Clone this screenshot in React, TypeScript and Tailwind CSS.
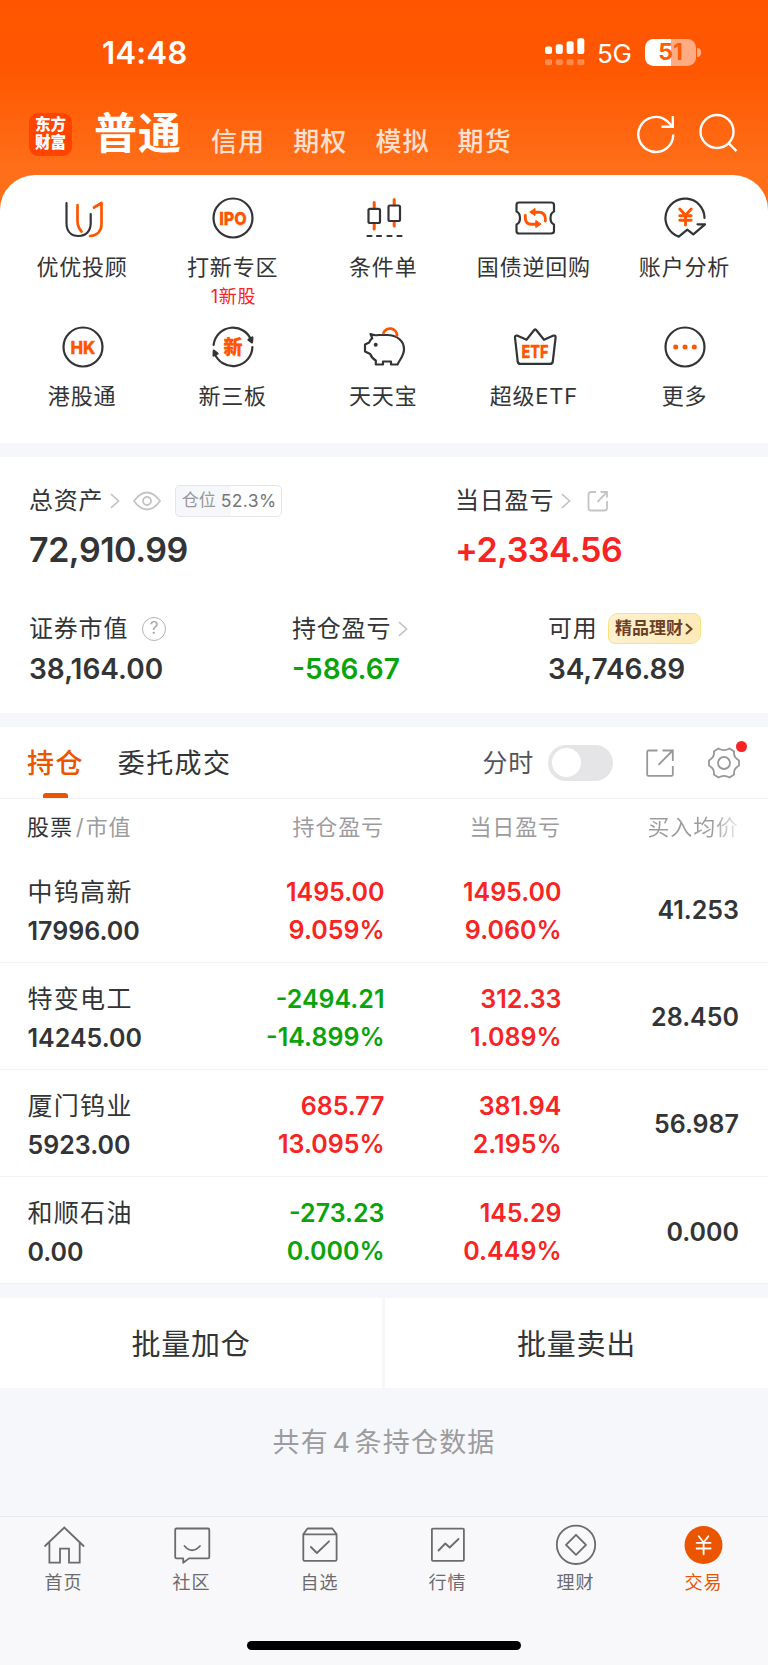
import React from 'react';

type Tone = 'up' | 'down';

interface Holding {
  name: string;
  value: string;
  profit: [string, string];
  profitTone: Tone;
  daily: [string, string];
  price: string;
}

const holdings: Holding[] = [
  { name: '中钨高新', value: '17996.00', profit: ['1495.00', '9.059%'], profitTone: 'up', daily: ['1495.00', '9.060%'], price: '41.253' },
  { name: '特变电工', value: '14245.00', profit: ['-2494.21', '-14.899%'], profitTone: 'down', daily: ['312.33', '1.089%'], price: '28.450' },
  { name: '厦门钨业', value: '5923.00', profit: ['685.77', '13.095%'], profitTone: 'up', daily: ['381.94', '2.195%'], price: '56.987' },
  { name: '和顺石油', value: '0.00', profit: ['-273.23', '0.000%'], profitTone: 'down', daily: ['145.29', '0.449%'], price: '0.000' },
];

const toneClass: Record<Tone, string> = {
  up: 'text-[#f82323]',
  down: 'text-[#09a409]',
};

const DARK = '#333436';
const ORANGE = '#ff5500';

const Icon: React.FC<{ children: React.ReactNode; stroke?: string; width?: number }> = ({ children, stroke = DARK, width = 2.2 }) => (
  <svg
    viewBox="0 0 48 48"
    className="h-12 w-12 shrink-0"
    fill="none"
    stroke={stroke}
    strokeWidth={width}
    strokeLinecap="round"
    strokeLinejoin="round"
  >
    {children}
  </svg>
);

const IconText: React.FC<{ text: string; y: number; length: number; size?: number }> = ({ text, y, length, size = 18 }) => (
  <text
    x="24"
    y={y}
    textAnchor="middle"
    textLength={length}
    lengthAdjust="spacingAndGlyphs"
    fontSize={size}
    fontWeight="800"
    fill={ORANGE}
    stroke={ORANGE}
    strokeWidth="0.3"
    fontFamily="Inter, 'Noto Sans CJK SC', sans-serif"
  >
    {text}
  </text>
);

const shortcuts: { label: string; note?: string; icon: React.ReactNode }[] = [
  {
    label: '优优投顾',
    icon: (
      <Icon>
        <path d="M7.5 9V29C7.5 37 12 42 19.5 42S31.7 37 31.7 29V20" />
        <path d="M18.5 11V27Q18.5 33 22.5 37.5M35 13.5L42.5 9V30C42.5 37 38 41.5 31 42" stroke={ORANGE} strokeWidth="2.7" />
      </Icon>
    ),
  },
  {
    label: '打新专区',
    note: '1新股',
    icon: (
      <Icon>
        <circle cx="24" cy="24" r="19.5" />
        <IconText text="IPO" y={30.7} length={27.5} size={18} />
      </Icon>
    ),
  },
  {
    label: '条件单',
    icon: (
      <Icon>
        <path d="M14.2 8.5V14M14.2 30V35M34.2 5.5V11M34.2 28V32" stroke={ORANGE} strokeWidth="3" />
        <rect x="8.5" y="14.8" width="11.5" height="14.2" rx="1.5" />
        <rect x="28.5" y="11.5" width="11.5" height="15.5" rx="1.5" />
        <path d="M7.5 42H11.5M17 42H21M27.5 42H31.5M37.5 42H41.5" />
      </Icon>
    ),
  },
  {
    label: '国债逆回购',
    icon: (
      <Icon>
        <path d="M8 8.5H40Q43 8.5 43 11V17.5Q39.5 19 39.5 24T43 30.5V37Q43 39.5 40 39.5H8Q5.5 39.5 5.5 37V30.5Q9 29 9 24T5.5 17.5V11Q5.5 8.5 8 8.5Z" />
        <path d="M21 18.2H28Q34 18.2 34.3 24.5V27M27 30.2H20Q14.5 29.8 14.3 24.5V21.5" stroke={ORANGE} strokeWidth="2.9" />
        <path d="M24 14.8V21.6L19 18.2ZM24.8 26.8V33.6L29.8 30.2Z" fill={ORANGE} stroke={ORANGE} strokeWidth="1" />
      </Icon>
    ),
  },
  {
    label: '账户分析',
    icon: (
      <Icon>
        <path d="M43.5 24A19.5 19.5 0 1 0 17.8 42.6L26.3 35.6L32.3 40.3L44 30.3H36.5" />
        <path d="M18.8 15L24.5 21.2L30.2 15M24.5 21.5V31M18.8 21.8H30.2M18.8 26.3H30.2" stroke={ORANGE} strokeWidth="2.9" />
      </Icon>
    ),
  },
  {
    label: '港股通',
    icon: (
      <Icon>
        <circle cx="24" cy="24" r="19.5" />
        <IconText text="HK" y={30.5} length={25} />
      </Icon>
    ),
  },
  {
    label: '新三板',
    icon: (
      <Icon>
        <path d="M4.6 22A19.5 19.5 0 0 1 42.5 18M43.4 24A19.5 19.5 0 0 1 5.5 30" />
        <path d="M39.5 16.8L43.4 14.5L43 19.3ZM4.6 32.5L4.8 27.5L8.6 30.5Z" fill={DARK} />
        <IconText text="新" y={30.8} length={19} size={19} />
      </Icon>
    ),
  },
  {
    label: '天天宝',
    icon: (
      <Icon>
        <path d="M10.5 11Q14 12.8 18.5 12H27C37 12 44 18 44 26C44 33 40 36 37.5 41.5H31V38.5H23V41.5H15.8V37.5Q12 35.5 10.2 31L5 28.5V21.5L9.2 19.5Q10 16.5 12.3 15.2Z" />
        <circle cx="15.7" cy="21.8" r="2" fill={DARK} stroke="none" />
        <path d="M23.5 10A7 7 0 0 1 37 12.5" stroke={ORANGE} strokeWidth="2.8" />
      </Icon>
    ),
  },
  {
    label: '超级ETF',
    icon: (
      <Icon>
        <path d="M6 12.6L15.5 16.8L23.2 7Q24.2 6 25.2 7L33 16.8L42.5 12.6Q44.8 12.3 44.6 14.5L41.8 38.5Q41.5 40.9 39 40.9H9.5Q7 40.9 6.7 38.5L4 14.5Q3.8 12.3 6 12.6Z" />
        <IconText text="ETF" y={34.5} length={27} />
      </Icon>
    ),
  },
  {
    label: '更多',
    icon: (
      <Icon>
        <circle cx="24" cy="24" r="19.5" />
        <g fill={ORANGE} stroke="none">
          <circle cx="14.7" cy="24" r="2.5" />
          <circle cx="24" cy="24" r="2.5" />
          <circle cx="33.3" cy="24" r="2.5" />
        </g>
      </Icon>
    ),
  },
];

const GRAY = '#6b6b6d';

const navItems: { label: string; active?: boolean; icon: React.ReactNode }[] = [
  {
    label: '首页',
    icon: (
      <Icon stroke={GRAY} width={1.8}>
        <path d="M5 25L24.3 6.5L43.6 25M9.4 21V41.7H20V27.7H29V41.7H39.7V21" strokeLinejoin="miter" />
      </Icon>
    ),
  },
  {
    label: '社区',
    icon: (
      <Icon stroke={GRAY} width={1.8}>
        <path d="M8.5 7.5H40Q41.3 7.5 41.3 9V36Q41.3 37.4 40 37.4H21L15.2 41.7V37.4H8.5Q7.2 37.4 7.2 36V9Q7.2 7.5 8.5 7.5Z" />
        <path d="M16.5 25Q24 33.5 32 25" />
      </Icon>
    ),
  },
  {
    label: '自选',
    icon: (
      <Icon stroke={GRAY} width={1.8}>
        <path d="M7.3 13.3L11.5 7.5H36.3L40.6 13.3V38.5Q40.6 39.9 39.2 39.9H8.7Q7.3 39.9 7.3 38.5ZM7.3 13.3H40.6M14.9 26L20.9 32L33 20.3" />
      </Icon>
    ),
  },
  {
    label: '行情',
    icon: (
      <Icon stroke={GRAY} width={1.8}>
        <rect x="7.9" y="7.6" width="32" height="32.2" rx="1" />
        <path d="M14.5 29.5L21.3 22.5L25.7 26.5L34.5 18" />
      </Icon>
    ),
  },
  {
    label: '理财',
    icon: (
      <Icon stroke={GRAY} width={1.8}>
        <circle cx="24" cy="23.8" r="19.2" />
        <path d="M24 13.8L34 23.8L24 33.8L14 23.8Z" />
      </Icon>
    ),
  },
  {
    label: '交易',
    active: true,
    icon: (
      <Icon stroke="#fff" width={1.8}>
        <circle cx="23.5" cy="24" r="19" fill="#eb5500" stroke="none" />
        <path d="M18.8 15.3L23.6 21.5L28.4 15.3M23.6 21.5V33.3M16.6 21.8H30.6M16.6 27.5H30.6" />
      </Icon>
    ),
  },
];

const Chevron = () => (
  <svg viewBox="0 0 10 16" className="h-4 w-2.5 shrink-0" fill="none" stroke="#c4c4c6" strokeWidth="1.6">
    <path d="M1 1.2L8.6 8L1 14.8" />
  </svg>
);

const StatusBar = () => (
  <div className="flex h-[104px] items-center justify-between pl-[102px] pr-[67px] text-white">
    <span className="text-[31px] font-semibold leading-none tracking-[0.3px]">14:48</span>
    <div className="flex items-center">
      <svg viewBox="0 0 40 28" className="h-7 w-10" fill="#fff">
        <rect x="0" y="8.6" width="7" height="7.5" rx="2" />
        <rect x="10.8" y="6.3" width="7" height="9.8" rx="2" />
        <rect x="21.6" y="3.3" width="7" height="12.8" rx="2" />
        <rect x="32.3" y="0.3" width="7" height="15.8" rx="2" />
        <g opacity="0.3">
          <rect x="0" y="21" width="7" height="6.3" rx="2" />
          <rect x="10.8" y="21" width="7" height="6.3" rx="2" />
          <rect x="21.6" y="21" width="7" height="6.3" rx="2" />
          <rect x="32.3" y="21" width="7" height="6.3" rx="2" />
        </g>
      </svg>
      <span className="ml-[12px] w-[35px] pt-[3px] text-[26px] leading-none tracking-[-0.3px]">5G</span>
      <div className="ml-[13px] flex h-[27px] w-[51px] items-center justify-center rounded-[8.5px] bg-[linear-gradient(90deg,#fff_51%,#ffab83_51%)] text-[23px] font-bold leading-none text-[#ff5a05]">
        51
      </div>
      <div className="ml-[1px] h-[9px] w-[4px] rounded-r-full bg-[#ffab83]" />
    </div>
  </div>
);

const Header = () => (
  <div className="flex h-[71px] items-center pl-[29px] pr-[29px] text-white">
    <div className="mb-[11px] flex h-[43px] w-[43px] flex-col items-center justify-center rounded-[9px] bg-[#ff4400] text-[15.5px] font-black leading-[18px]">
      <span>东方</span>
      <span>财富</span>
    </div>
    <span className="mb-[13px] ml-[22px] text-[43px] font-bold leading-[50px] tracking-[1px]">普通</span>
    <div className="ml-[29px] flex gap-[28px] pt-[4px] text-[26px] font-medium leading-[36px] tracking-[1.1px] text-[#ffe0d0]">
      <span>信用</span>
      <span>期权</span>
      <span>模拟</span>
      <span>期货</span>
    </div>
    <div className="mb-[12px] ml-auto flex gap-[20px]">
      <svg viewBox="0 0 42 42" className="h-[42px] w-[42px]" fill="none" stroke="#fff" strokeWidth="2.4">
        <path d="M38.3 21.5A17.5 17.5 0 1 1 32 8L37.5 13.5M37.8 3V13.8H26.5" />
      </svg>
      <svg viewBox="0 0 42 42" className="h-[42px] w-[42px]" fill="none" stroke="#fff" strokeWidth="2.4">
        <circle cx="20" cy="18.5" r="16.5" />
        <path d="M31.5 30L39.5 38.2" />
      </svg>
    </div>
  </div>
);

const Shortcuts = () => (
  <div className="grid h-[268px] grid-cols-5 content-start rounded-t-[35px] bg-white px-[7.5px] pt-[19px]">
    {shortcuts.map((item) => (
      <div key={item.label} className="flex h-[128.5px] flex-col items-center">
        {item.icon}
        <span className="mr-[1.5px] mt-[8px] text-[22px] leading-[34px] tracking-[0.8px] text-[#333436]">{item.label}</span>
        {item.note && <span className="mt-px text-[18px] leading-[24px] tracking-[0.7px] text-[#f82323]">{item.note}</span>}
      </div>
    ))}
  </div>
);

const Summary = () => (
  <div className="mt-[14px] h-[256px] bg-white pl-[29px] text-[#333436]">
    <div className="flex h-[130px] pt-[26px]">
      <div className="w-[426px]">
        <div className="flex h-[35px] items-center">
          <span className="text-[24px] tracking-[0.7px]">总资产</span>
          <div className="ml-[7px]"><Chevron /></div>
          <svg viewBox="0 0 28 20" className="ml-[13px] h-5 w-7" fill="none" stroke="#c4c4c6" strokeWidth="1.8">
            <path d="M1 10C5.5 3.8 9.5 1.5 14 1.5S22.5 3.8 27 10C22.5 16.2 18.5 18.5 14 18.5S5.5 16.2 1 10Z" />
            <circle cx="14" cy="10" r="4" />
          </svg>
          <div className="ml-[14px] flex h-[32px] w-[107px] items-center justify-center rounded-[5px] border border-[#e6e6e9] bg-[linear-gradient(90deg,#f6f7fa_52.3%,#fff_52.3%)] pl-[1px] pt-[1px] text-[17px] text-[#77777a]">
            <span className="text-[#98989b]">仓位</span>
            <span className="ml-[5px] text-[17.5px] tracking-[0.4px]">52.3%</span>
          </div>
        </div>
        <div className="mt-[11px] text-[34px] font-semibold leading-[42px] tracking-[-0.45px]">72,910.99</div>
      </div>
      <div>
        <div className="flex h-[35px] items-center">
          <span className="text-[24px] tracking-[0.8px]">当日盈亏</span>
          <div className="ml-[7px]"><Chevron /></div>
          <svg viewBox="0 0 22 22" className="ml-[16px] mt-px h-[22px] w-[22px]" fill="none" stroke="#c4c4c6" strokeWidth="1.8">
            <path d="M9 2H4Q1.5 2 1.5 4.5V18Q1.5 20.5 4 20.5H17.5Q20 20.5 20 18V11M13.5 2H20V7.5M20 2L10.5 11.8" />
          </svg>
        </div>
        <div className="mt-[11px] text-[34px] font-semibold leading-[42px] tracking-[-0.5px] text-[#f82323]">+2,334.56</div>
      </div>
    </div>
    <div className="flex pt-[24px]">
      <div className="w-[263px]">
        <div className="flex h-[35px] items-center">
          <span className="text-[24px] tracking-[0.8px]">证券市值</span>
          <div className="ml-[14px] flex h-[24px] w-[24px] items-center justify-center rounded-full border-[1.5px] border-[#b4b4b7] text-[17px] leading-none text-[#a6a6a9]">?</div>
        </div>
        <div className="mt-[4px] text-[28px] font-semibold leading-[38px]">38,164.00</div>
      </div>
      <div className="w-[256px]">
        <div className="flex h-[35px] items-center">
          <span className="text-[24px] tracking-[0.8px]">持仓盈亏</span>
          <div className="ml-[7px]"><Chevron /></div>
        </div>
        <div className="mt-[4px] text-[28px] font-semibold leading-[38px] text-[#09a409]">-586.67</div>
      </div>
      <div>
        <div className="flex h-[35px] items-center">
          <span className="text-[24px] tracking-[0.8px]">可用</span>
          <div className="ml-[10px] flex h-[31px] w-[93px] items-center justify-center rounded-tl-[10px] rounded-tr-[7px] rounded-br-[10px] rounded-bl-[7px] border-[1.5px] border-[#fbe27a] bg-gradient-to-r from-[#fff1d0] to-[#feeab8] text-[17px] font-bold text-[#6d4126]">
            精品理财
            <svg viewBox="0 0 8 12" className="ml-[2px] h-3 w-2" fill="none" stroke="#6d4126" strokeWidth="2.2">
              <path d="M1 1L6.5 6L1 11" />
            </svg>
          </div>
        </div>
        <div className="mt-[4px] text-[28px] font-semibold leading-[38px] tracking-[-0.1px]">34,746.89</div>
      </div>
    </div>
  </div>
);

const Tabs = () => (
  <div className="mt-[14px] flex h-[72px] items-center border-b border-[#f3f3f5] bg-white pl-[27px] pr-[28px]">
    <div className="flex h-full flex-col items-center text-[#eb5500]">
      <span className="mt-[17px] text-[27px] font-medium leading-[40px] tracking-[1.4px]">持仓</span>
      <span className="mt-auto h-[5px] w-[25px] rounded-t-[3px] bg-[#eb5500]" />
    </div>
    <span className="ml-[34px] pt-[2px] text-[27px] leading-[40px] tracking-[1.4px] text-[#333436]">委托成交</span>
    <span className="ml-auto pt-px text-[25px] leading-[40px] tracking-[0.8px] text-[#555558]">分时</span>
    <div className="ml-[14px] flex h-[36px] w-[65px] items-center rounded-full bg-[#e5e5e7] pl-[3.5px]">
      <div className="h-[29px] w-[29px] rounded-full bg-white" />
    </div>
    <svg viewBox="0 0 28 28" className="ml-[33px] h-7 w-7" fill="none" stroke="#98989b" strokeWidth="1.8">
      <path d="M11.5 1.5H2.5Q1.2 1.5 1.2 2.8V25.5Q1.2 26.8 2.5 26.8H25.5Q26.8 26.8 26.8 25.5V17M16.5 1.5H26.8V12M26.8 1.5L12.5 15.8" />
    </svg>
    <div className="relative ml-[34px]">
      <svg viewBox="0 0 32 32" className="h-8 w-8" fill="none" stroke="#98989b" strokeWidth="1.8" strokeLinejoin="round">
        <circle cx="16" cy="16" r="6" />
        <path d="M10.5 1.5Q16 4.8 21.5 1.5L26.2 4.5Q25 10 31 13.5V18.5Q25 22 26.2 27.5L21.5 30.5Q16 27.2 10.5 30.5L5.8 27.5Q7 22 1 18.5V13.5Q7 10 5.8 4.5Z" />
      </svg>
      <span className="absolute -right-[7px] -top-[6px] h-[11px] w-[11px] rounded-full bg-[#f82323]" />
    </div>
  </div>
);

const HoldingsTable = () => (
  <div className="bg-white">
    <div className="flex h-[57px] items-center pl-[27px] text-[22px] tracking-[0.9px] text-[#9c9c9f]">
      <div className="w-[170px]">
        <span className="text-[#333436]">股票</span>
        <span className="ml-[3px] mr-[1px]">/</span>
        <span>市值</span>
      </div>
      <span className="w-[187px] text-right">持仓盈亏</span>
      <span className="w-[177px] text-right">当日盈亏</span>
      <span className="w-[178px] bg-gradient-to-r from-[#9c9c9f] from-85% to-[#efeff1] bg-clip-text text-right text-transparent">买入均价</span>
    </div>
    {holdings.map((item) => (
      <div key={item.name} className="flex h-[107.1px] items-center border-b border-[#f3f3f5] pl-[27.5px] pt-[4px] text-[25px] font-semibold text-[#333436]">
        <div className="w-[170px]">
          <div className="text-[25px] font-normal leading-[39px] tracking-[1.3px]">{item.name}</div>
          <div className="leading-[38px]">{item.value}</div>
        </div>
        <div className={`w-[187px] text-right leading-[38.5px] ${toneClass[item.profitTone]}`}>
          <div>{item.profit[0]}</div>
          <div>{item.profit[1]}</div>
        </div>
        <div className="w-[177px] text-right leading-[38.5px] text-[#f82323]">
          <div>{item.daily[0]}</div>
          <div>{item.daily[1]}</div>
        </div>
        <div className="w-[177.5px] text-right">{item.price}</div>
      </div>
    ))}
  </div>
);

const BottomNav = () => (
  <div className="h-[149px] border-t border-[#e8e8eb] bg-[#f8f8fb]">
    <div className="grid grid-cols-6 pt-[4px]">
      {navItems.map((item) => (
        <div key={item.label} className="flex flex-col items-center">
          {item.icon}
          <span className={`mr-[1px] mt-px text-[18px] leading-[26px] tracking-[1px] ${item.active ? 'text-[#eb5500]' : 'text-[#6b6b6d]'}`}>
            {item.label}
          </span>
        </div>
      ))}
    </div>
    <div className="mx-auto mt-[45px] h-[9px] w-[274px] rounded-full bg-black" />
  </div>
);

export default function App() {
  return (
    <div className="h-[1665px] w-[768px] overflow-hidden bg-[#f6f7fa] font-[Inter,'Noto_Sans_CJK_SC',sans-serif]">
      <div className="bg-[linear-gradient(180deg,#ff5500_0px,#ff5802_75px,#ff6e18_165px,#ff6e18_210px,#ff6e18_100%)]">
        <StatusBar />
        <Header />
        <Shortcuts />
      </div>
      <Summary />
      <Tabs />
      <HoldingsTable />
      <div className="mt-[14px] flex h-[90px] gap-[3px] text-[29px] tracking-[0.8px] text-[#333436]">
        <div className="flex w-[382px] items-center justify-center bg-white pt-[3px]">批量加仓</div>
        <div className="flex flex-1 items-center justify-center bg-white pt-[3px]">批量卖出</div>
      </div>
      <div className="flex h-[128px] items-center justify-center pb-[18px] text-[27px] tracking-[1.2px] text-[#9c9c9f]">
        共有<span className="mx-[3.5px]">4</span>条持仓数据
      </div>
      <BottomNav />
    </div>
  );
}
